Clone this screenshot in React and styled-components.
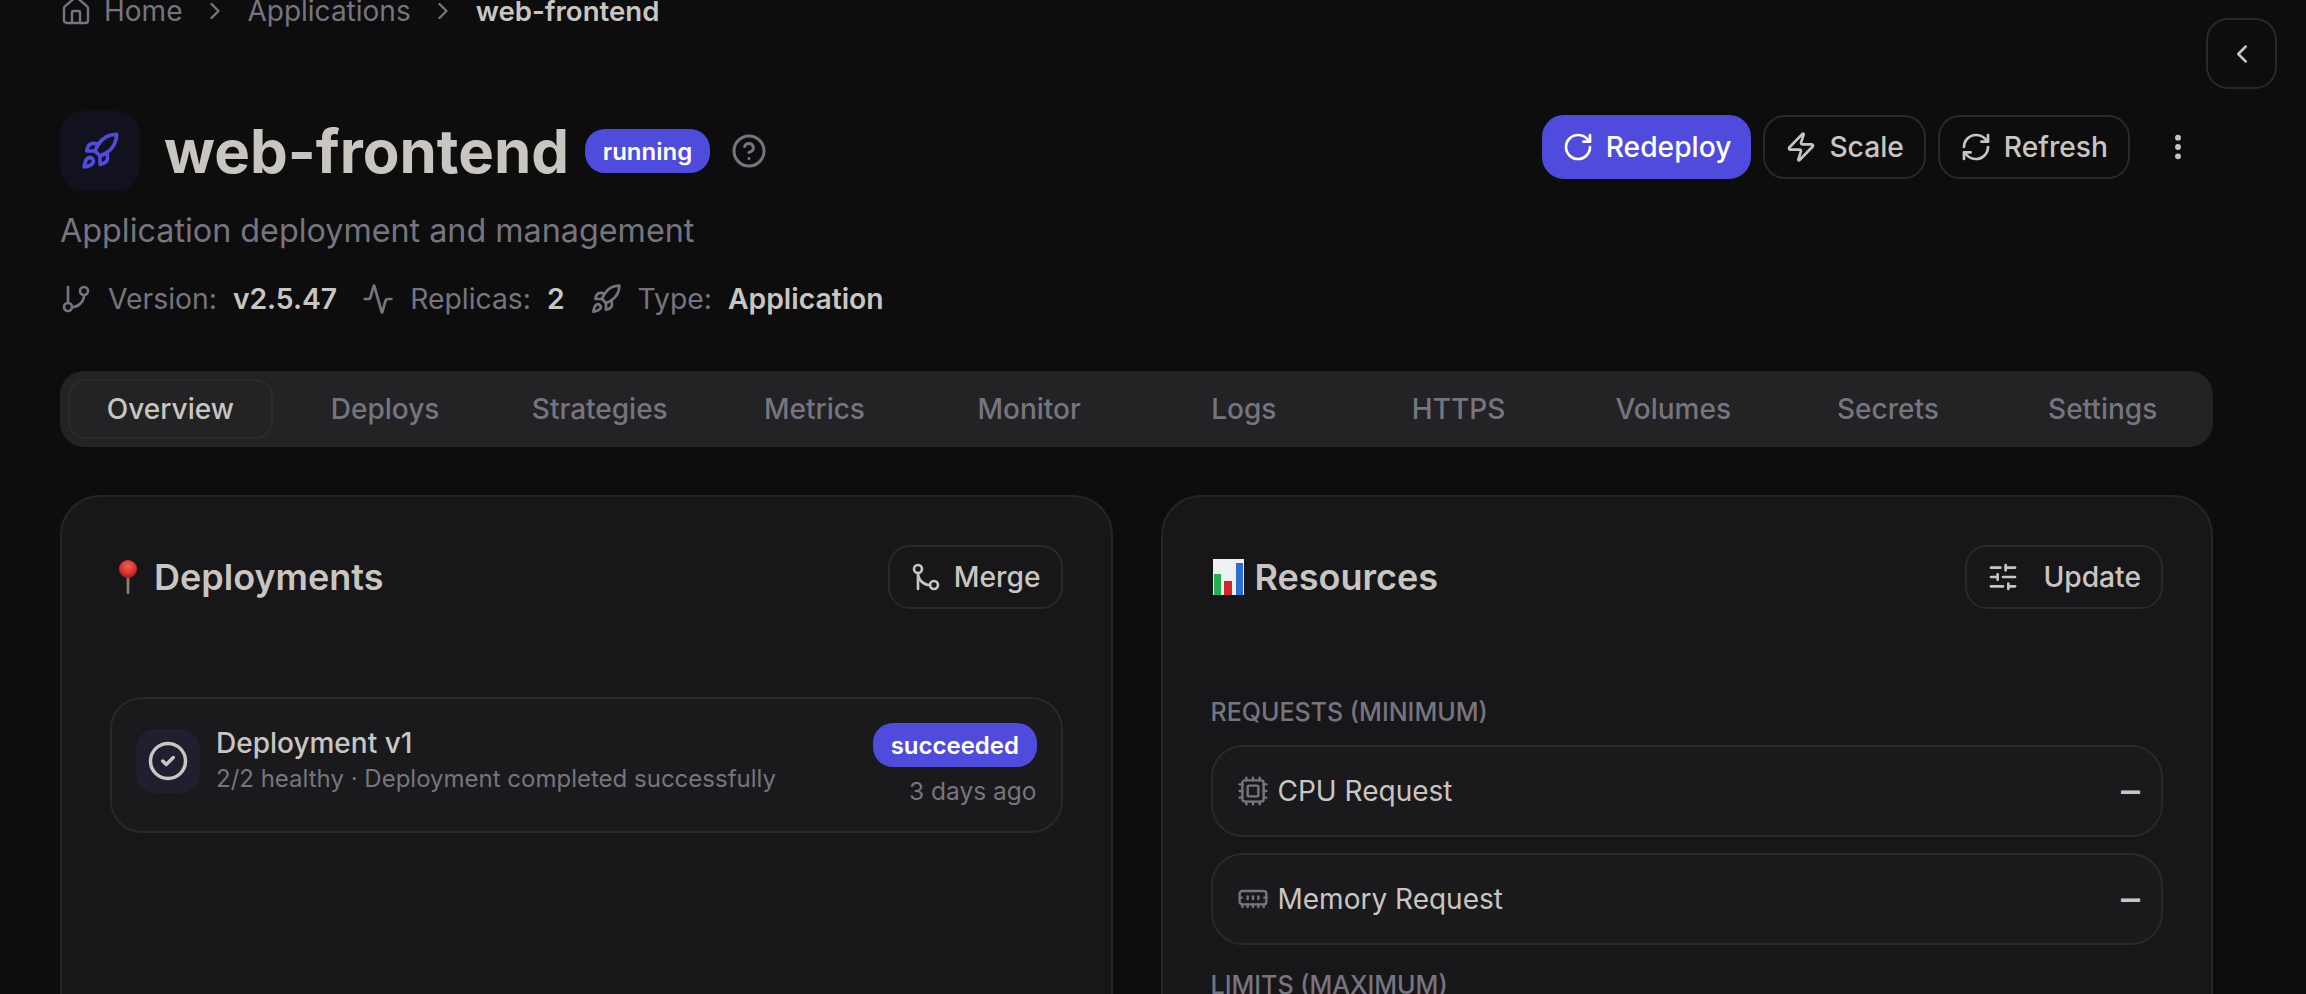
import * as React from 'react'
import styled, { createGlobalStyle } from 'styled-components'
import {
  Activity, ChevronLeft, ChevronRight, CircleCheck, CircleHelp, Cpu, EllipsisVertical,
  GitBranch, GitMerge, House, MemoryStick, RefreshCw, Rocket, RotateCw, SlidersHorizontal, Zap,
} from 'lucide-react'

const GlobalStyle = createGlobalStyle`
  html, body {
    margin: 0;
    height: 100%;
    overflow: hidden;
    background: #0d0d0e;
  }
  body {
    font-family: Inter, "Liberation Sans", sans-serif;
    color: #c9c6c2;
  }
  * { box-sizing: border-box; }
`

const Page = styled.div`
  position: relative;
  height: 994px;
  overflow: hidden;
  padding: 0 93px 0 60px;
`

const CollapseButton = styled.button`
  position: absolute;
  top: 18px;
  left: 2206px;
  width: 71px;
  height: 71px;
  display: flex;
  align-items: center;
  justify-content: center;
  background: #0d0d0e;
  border: 2px solid #29292b;
  border-radius: 22px;
  color: #c9c6c2;
  padding: 0;
`

const Breadcrumb = styled.nav`
  display: flex;
  align-items: center;
  height: 40px;
  margin-top: -9px;
  font-size: 28px;
  color: #76757f;
`

const Crumb = styled.span`
  display: flex;
  align-items: center;
  gap: 12px;
  font-weight: ${(props) => (props.current ? 600 : 400)};
  color: ${(props) => (props.current ? '#c9c6c2' : '#76757f')};
  font-size: ${(props) => (props.current ? 27.6 : 28)}px;
`

const CrumbSep = styled(ChevronRight)`
  margin: 0 18.5px;
  flex: none;
`

const Header = styled.header`
  display: flex;
  align-items: center;
  justify-content: space-between;
  margin-top: 80px;
`

const TitleGroup = styled.div`
  display: flex;
  align-items: center;
`

const AppTile = styled.div`
  width: 80px;
  height: 80px;
  border-radius: 24px;
  background: #12121f;
  color: #4f4bdc;
  display: flex;
  align-items: center;
  justify-content: center;
  margin-right: 24px;
`

const Title = styled.h1`
  margin: 0 16px 0 0;
  font-size: 60px;
  line-height: 80px;
  font-weight: 700;
  color: #c9c6c2;
`

const Badge = styled.span`
  display: inline-flex;
  align-items: center;
  justify-content: center;
  height: 44px;
  padding: 0 17.5px;
  border-radius: 20px;
  background: #4f4bdc;
  color: #fff;
  font-size: 24px;
  font-weight: 600;
`

const HelpIcon = styled(CircleHelp)`
  margin-left: 21px;
  color: #76757f;
`

const Actions = styled.div`
  display: flex;
  align-items: center;
  gap: 12px;
  margin-top: -8px;
`

const Button = styled.button`
  display: inline-flex;
  align-items: center;
  gap: ${(props) => props.gap || 12}px;
  height: 64px;
  padding: 0 ${(props) => (props.primary ? 18 : 20)}px;
  border-radius: 22px;
  font-family: inherit;
  font-size: 28.2px;
  font-weight: 500;
  color: ${(props) => (props.primary ? '#fff' : '#c9c6c2')};
  background: ${(props) => (props.primary ? '#4f4bdc' : 'transparent')};
  border: 2px solid ${(props) => (props.primary ? '#4f4bdc' : '#29292b')};
`

const MoreButton = styled.button`
  display: flex;
  align-items: center;
  justify-content: center;
  width: 71px;
  height: 64px;
  background: none;
  border: 0;
  padding: 0;
  color: #c9c6c2;
`

const Subtitle = styled.p`
  margin: 18px 0 0;
  font-size: 32.3px;
  line-height: 44px;
  color: #76757f;
`

const MetaRow = styled.div`
  display: flex;
  align-items: center;
  margin-top: 24px;
  font-size: 28.3px;
  line-height: 44px;
  color: #76757f;
`

const MetaItem = styled.span`
  display: flex;
  align-items: center;
  margin-right: 25px;
  gap: 16px;
`

const MetaValue = styled.b`
  font-weight: 600;
  color: #c9c6c2;
`

const Tabs = styled.div`
  display: grid;
  grid-template-columns: repeat(10, 1fr);
  gap: 10px;
  height: 76px;
  margin-top: 50px;
  padding: 8px;
  border-radius: 24px;
  background: #232326;
`

const Tab = styled.div`
  display: flex;
  align-items: center;
  justify-content: center;
  border-radius: 18px;
  font-size: 28px;
  font-weight: 500;
  color: ${(props) => (props.active ? '#c9c6c2' : '#76757f')};
  border: 2px solid ${(props) => (props.active ? '#2b2b2e' : 'transparent')};
`

const Columns = styled.div`
  display: grid;
  grid-template-columns: 1fr 1fr;
  gap: 48px;
  margin-top: 48px;
`

const Card = styled.section`
  height: 700px;
  padding: 48px;
  border: 2px solid #252528;
  border-radius: 40px;
  background: #17171a;
`

const CardHeader = styled.div`
  display: flex;
  align-items: center;
  justify-content: space-between;
  height: 64px;
`

const CardTitle = styled.h2`
  display: flex;
  align-items: center;
  gap: 8px;
  margin: 0;
  font-size: 36px;
  font-weight: 600;
  color: #c9c6c2;
`

const EmojiBox = styled.svg`
  flex: none;
`

const DeployList = styled.div`
  margin-top: 88px;
`

const DeployRow = styled.div`
  display: flex;
  align-items: flex-start;
  justify-content: space-between;
  height: 136px;
  padding: 24px;
  border: 2px solid #29292c;
  border-radius: 32px;
  background: #1a1a1d;
`

const DeployLeft = styled.div`
  display: flex;
  align-items: center;
  gap: 16px;
  margin-top: 4px;
`

const StatusTile = styled.div`
  width: 64px;
  height: 64px;
  border-radius: 20px;
  background: #1f1f30;
  display: flex;
  align-items: center;
  justify-content: center;
  color: #c9c6c2;
`

const DeployText = styled.div`
  margin-top: -4px;
`

const DeployName = styled.div`
  font-size: 28px;
  line-height: 40px;
  font-weight: 500;
`

const DeployInfo = styled.div`
  font-size: 24px;
  line-height: 32px;
  color: #76757f;
`

const DeployRight = styled.div`
  display: flex;
  flex-direction: column;
  align-items: flex-end;
  gap: 8px;
`

const TimeAgo = styled.div`
  font-size: 24.5px;
  line-height: 32px;
  color: #76757f;
`

const SectionLabel = styled.div`
  margin-top: ${(props) => props.top}px;
  font-size: 25px;
  line-height: 32px;
  font-weight: 500;
  color: #76757f;
`

const ResourceList = styled.div`
  display: flex;
  flex-direction: column;
  gap: 16px;
  margin-top: 17px;
`

const ResourceRow = styled.div`
  display: flex;
  align-items: center;
  justify-content: space-between;
  height: 92px;
  padding: 0 24px;
  border: 2px solid #29292c;
  border-radius: 32px;
  background: #1a1a1d;
`

const ResourceName = styled.span`
  display: flex;
  align-items: center;
  gap: 9px;
  font-size: 28px;
  color: #c9c6c2;

  svg { color: #76757f; }
`

const ResourceValue = styled.span`
  margin: -3px -3px 0 0;
  font-size: 38px;
  line-height: 1;
  font-weight: 500;
  color: #c9c6c2;
`

const PinEmoji = () => (
  <EmojiBox width="36" height="36" viewBox="0 0 36 36">
    <defs>
      <radialGradient id="pin" cx="0.5" cy="0.35" r="0.6">
        <stop offset="0" stopColor="#f2625c" />
        <stop offset="0.7" stopColor="#d9302c" />
        <stop offset="1" stopColor="#a81f1f" />
      </radialGradient>
    </defs>
    <rect x="16.6" y="14" width="2.8" height="21" rx="1" fill="#8a7d72" />
    <circle cx="18" cy="10" r="9" fill="url(#pin)" />
  </EmojiBox>
)

const ChartEmoji = () => (
  <EmojiBox width="36" height="36" viewBox="0 0 36 36">
    <rect x="2" width="31" height="36" fill="#eef0f2" />
    <rect x="3" y="15" width="7" height="21" fill="#22b14c" />
    <rect x="13" y="22" width="8" height="14" fill="#d0262c" />
    <rect x="25" y="4" width="7" height="32" fill="#2a6fd6" />
  </EmojiBox>
)

const tabs = ['Overview', 'Deploys', 'Strategies', 'Metrics', 'Monitor', 'Logs', 'HTTPS', 'Volumes', 'Secrets', 'Settings']

export default function App() {
  return (
    <Page>
      <GlobalStyle />
      <CollapseButton><ChevronLeft size={30} strokeWidth={2} /></CollapseButton>

      <Breadcrumb>
        <Crumb><House size={32} strokeWidth={1.8} />Home</Crumb>
        <CrumbSep size={28} strokeWidth={2} />
        <Crumb>Applications</Crumb>
        <CrumbSep size={28} strokeWidth={2} />
        <Crumb current>web-frontend</Crumb>
      </Breadcrumb>

      <Header>
        <TitleGroup>
          <AppTile><Rocket size={40} strokeWidth={2.2} /></AppTile>
          <Title>web-frontend</Title>
          <Badge>running</Badge>
          <HelpIcon size={36} strokeWidth={2} />
        </TitleGroup>
        <Actions>
          <Button primary><RotateCw size={32} strokeWidth={2} />Redeploy</Button>
          <Button><Zap size={32} strokeWidth={2} />Scale</Button>
          <Button><RefreshCw size={32} strokeWidth={2} />Refresh</Button>
          <MoreButton><EllipsisVertical size={32} strokeWidth={2.4} /></MoreButton>
        </Actions>
      </Header>

      <Subtitle>Application deployment and management</Subtitle>

      <MetaRow>
        <MetaItem><GitBranch size={32} strokeWidth={2} />Version: <MetaValue>v2.5.47</MetaValue></MetaItem>
        <MetaItem><Activity size={32} strokeWidth={2} />Replicas: <MetaValue>2</MetaValue></MetaItem>
        <MetaItem><Rocket size={32} strokeWidth={2} />Type: <MetaValue>Application</MetaValue></MetaItem>
      </MetaRow>

      <Tabs>
        {tabs.map((t, i) => <Tab key={t} active={i === 0}>{t}</Tab>)}
      </Tabs>

      <Columns>
        <Card>
          <CardHeader>
            <CardTitle><PinEmoji />Deployments</CardTitle>
            <Button><GitMerge size={32} strokeWidth={2} />Merge</Button>
          </CardHeader>
          <DeployList>
            <DeployRow>
              <DeployLeft>
                <StatusTile><CircleCheck size={42} strokeWidth={2} /></StatusTile>
                <DeployText>
                  <DeployName>Deployment v1</DeployName>
                  <DeployInfo>2/2 healthy · Deployment completed successfully</DeployInfo>
                </DeployText>
              </DeployLeft>
              <DeployRight>
                <Badge>succeeded</Badge>
                <TimeAgo>3 days ago</TimeAgo>
              </DeployRight>
            </DeployRow>
          </DeployList>
        </Card>

        <Card>
          <CardHeader>
            <CardTitle><ChartEmoji />Resources</CardTitle>
            <Button gap={24}><SlidersHorizontal size={32} strokeWidth={2} />Update</Button>
          </CardHeader>
          <SectionLabel top={87}>REQUESTS (MINIMUM)</SectionLabel>
          <ResourceList>
            <ResourceRow>
              <ResourceName><Cpu size={32} strokeWidth={1.8} />CPU Request</ResourceName>
              <ResourceValue>–</ResourceValue>
            </ResourceRow>
            <ResourceRow>
              <ResourceName><MemoryStick size={32} strokeWidth={1.8} />Memory Request</ResourceName>
              <ResourceValue>–</ResourceValue>
            </ResourceRow>
          </ResourceList>
          <SectionLabel top={24}>LIMITS (MAXIMUM)</SectionLabel>
        </Card>
      </Columns>
    </Page>
  )
}
